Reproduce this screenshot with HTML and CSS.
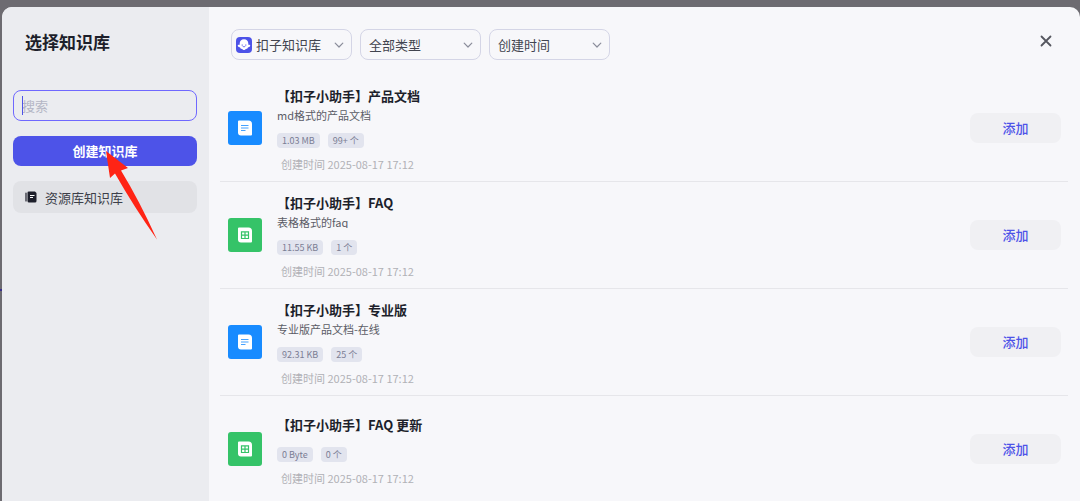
FILE: index.html
```html
<!DOCTYPE html>
<html lang="zh-CN">
<head>
  <meta charset="UTF-8" />
  <meta name="viewport" content="width=device-width, initial-scale=1.0"/>
  <title>选择知识库</title>
  <link rel="stylesheet" href="styles.css">
</head>
<body>
  <svg class="symbols" aria-hidden="true">
    <symbol id="icon-doc" viewBox="0 0 34 34">
      <path fill="#fff" d="M11 9.500h9.500a3.500 3.500 0 0 1 3.500 3.500v10.500a1 1 0 0 1-1 1h-10a3 3 0 0 1-3-3v-11a1 1 0 0 1 1-1z"/>
      <path stroke="#188bff" stroke-opacity=".8" stroke-width="1.200" d="M13 14.500h7.500M13 17h7.500M13 19.500h4.500"/>
    </symbol>
    <symbol id="icon-table" viewBox="0 0 34 34">
      <path fill="#fff" d="M11 9.500h9.500a3.500 3.500 0 0 1 3.500 3.500v10.500a1 1 0 0 1-1 1h-10a3 3 0 0 1-3-3v-11a1 1 0 0 1 1-1z"/>
      <path fill="none" stroke="#35c368" stroke-width="1.200" d="M13.500 13.800h7v6.700h-7zM13.500 17.200h7M17 13.800v6.700"/>
    </symbol>
    <symbol id="icon-chevron" viewBox="0 0 10 10">
      <path fill="none" stroke="#8b8d9b" stroke-width="1.200" stroke-linecap="round" stroke-linejoin="round" d="M1.200 3.200L5 7l3.800-3.800"/>
    </symbol>
  </svg>

  <div class="page-mark"></div>

  <div class="modal" role="dialog" aria-labelledby="modalTitle">
    <aside class="sidebar">
      <h1 class="title" id="modalTitle">选择知识库</h1>
      <div class="search">
        <input class="search-input" type="text" placeholder="搜索" aria-label="搜索">
      </div>
      <button class="create-btn" type="button">创建知识库</button>
      <a class="nav-item" href="#">
        <svg class="nav-icon" viewBox="0 0 12 12" aria-hidden="true">
          <path fill="none" stroke="#1d1f2b" stroke-width="1.200" stroke-linecap="round" d="M1 2v8"/>
          <path fill="#1d1f2b" d="M3.800.5H10l1.500 1.500v8a1.500 1.500 0 0 1-1.500 1.500H4A1.500 1.500 0 0 1 2.500 10V1.800A1.300 1.300 0 0 1 3.800.5z"/>
          <path stroke="#fff" stroke-width="1" d="M5 4.500h4.500M5 6.500h3"/>
        </svg>
        资源库知识库
      </a>
      <svg class="pointer" viewBox="0 0 52 90" aria-hidden="true">
        <path fill="#ff2415" d="M1 1l22 17-7 2.500Q34 50 52 89.500 29 57 10 23.500L5 28z"/>
      </svg>
    </aside>

    <main class="content">
      <header class="toolbar">
        <div class="filter filter-logo">
          <svg class="logo" viewBox="0 0 16 16" aria-hidden="true">
            <rect width="16" height="16" rx="4" fill="#4d53e8"/>
            <path fill="#fff" d="M8 2.200c2.700 0 4.300 1.900 4.300 4.300v1.300h1.200c.9 0 1 1.500.1 1.900l-1.700.8c-.3 1.200-1.200 1.600-2.200 1.400-.6 1.500-2.800 1.500-3.400 0-1 .2-1.900-.2-2.200-1.400l-1.700-.8c-.9-.4-.8-1.900.1-1.900h1.200V6.500c0-2.400 1.600-4.300 4.300-4.300z"/>
            <path fill="none" stroke="#4d53e8" stroke-width=".8" stroke-linecap="round" d="M6.200 7.800v.6M9.800 7.800v.6M7 9.600q1 .8 2 0"/>
          </svg>
          <select class="filter-select" aria-label="知识库">
            <option>扣子知识库</option>
          </select>
          <svg class="chevron" aria-hidden="true"><use href="#icon-chevron"/></svg>
        </div>
        <div class="filter">
          <select class="filter-select" aria-label="类型">
            <option>全部类型</option>
          </select>
          <svg class="chevron" aria-hidden="true"><use href="#icon-chevron"/></svg>
        </div>
        <div class="filter">
          <select class="filter-select" aria-label="排序">
            <option>创建时间</option>
          </select>
          <svg class="chevron" aria-hidden="true"><use href="#icon-chevron"/></svg>
        </div>
        <button class="close-btn" type="button" aria-label="关闭">
          <svg class="close-icon" viewBox="0 0 12 12" aria-hidden="true">
            <path stroke="#55565f" stroke-width="1.800" stroke-linecap="round" d="M1.500 1.500l9 9M10.500 1.500l-9 9"/>
          </svg>
        </button>
      </header>

      <ul class="list">
        <li class="item">
          <svg class="item-icon doc" aria-hidden="true"><use href="#icon-doc"/></svg>
          <div class="item-body">
            <h2 class="item-title">【扣子小助手】产品文档</h2>
            <p class="item-desc">md格式的产品文档</p>
            <div class="tags"><span class="tag">1.03 MB</span><span class="tag">99+ 个</span></div>
            <p class="item-time">创建时间 2025-08-17 17:12</p>
          </div>
          <button class="add-btn" type="button">添加</button>
        </li>
        <li class="item">
          <svg class="item-icon table" aria-hidden="true"><use href="#icon-table"/></svg>
          <div class="item-body">
            <h2 class="item-title">【扣子小助手】FAQ</h2>
            <p class="item-desc">表格格式的faq</p>
            <div class="tags"><span class="tag">11.55 KB</span><span class="tag">1 个</span></div>
            <p class="item-time">创建时间 2025-08-17 17:12</p>
          </div>
          <button class="add-btn" type="button">添加</button>
        </li>
        <li class="item">
          <svg class="item-icon doc" aria-hidden="true"><use href="#icon-doc"/></svg>
          <div class="item-body">
            <h2 class="item-title">【扣子小助手】专业版</h2>
            <p class="item-desc">专业版产品文档-在线</p>
            <div class="tags"><span class="tag">92.31 KB</span><span class="tag">25 个</span></div>
            <p class="item-time">创建时间 2025-08-17 17:12</p>
          </div>
          <button class="add-btn" type="button">添加</button>
        </li>
        <li class="item">
          <svg class="item-icon table" aria-hidden="true"><use href="#icon-table"/></svg>
          <div class="item-body">
            <h2 class="item-title">【扣子小助手】FAQ 更新</h2>
            <div class="tags"><span class="tag">0 Byte</span><span class="tag">0 个</span></div>
            <p class="item-time">创建时间 2025-08-17 17:12</p>
          </div>
          <button class="add-btn" type="button">添加</button>
        </li>
      </ul>
    </main>
  </div>
</body>
</html>
```
FILE: styles.css
```css
* {
  box-sizing: border-box;
}

body {
  margin: 0;
  height: 100vh;
  padding: 7px 0 0 2px;
  overflow: hidden;
  font-family: "Noto Sans CJK SC", sans-serif;
  font-size: 13px;
  color: #1d1f2b;
  background: #6d6b71;
}

button, input, select {
  font-family: inherit;
  font-size: 13px;
}

h1, h2, p, ul {
  margin: 0;
  padding: 0;
}

.symbols {
  position: absolute;
  width: 0;
  height: 0;
}

.page-mark {
  position: absolute;
  left: 0;
  top: 289px;
  width: 2px;
  height: 2px;
  background: #3a2f8c;
}

.modal {
  display: flex;
  height: 100%;
  border-radius: 10px 10px 0 0;
  overflow: hidden;
  background: #f7f7fa;
}

/* sidebar */
.sidebar {
  position: relative;
  display: flex;
  flex-direction: column;
  flex: 0 0 207px;
  padding: 23px 12px 0 11px;
  background: #ebecf0;
}

.title {
  padding-left: 12px;
  font-size: 17px;
  font-weight: 700;
  line-height: 24px;
}

.search {
  position: relative;
  margin-top: 36px;
}

.search::before {
  content: "";
  position: absolute;
  left: 9px;
  top: 6px;
  width: 1px;
  height: 19px;
  background: #4d53e8;
}

.search-input {
  display: block;
  width: 100%;
  height: 31px;
  padding: 0 8px;
  border: 1px solid #6f68ff;
  border-radius: 8px;
  outline: none;
  background: transparent;
}

.search-input::placeholder {
  color: #b4b6c5;
}

.create-btn {
  height: 30px;
  margin-top: 15px;
  padding: 0 0 2px;
  border: 0;
  border-radius: 8px;
  font-weight: 700;
  color: #fff;
  background: #4d53e8;
}

.nav-item {
  display: flex;
  align-items: center;
  gap: 8px;
  height: 32px;
  margin-top: 15px;
  padding: 0 12px;
  border-radius: 8px;
  color: #3d3f4a;
  text-decoration: none;
  background: #e1e2e6;
}

.nav-icon {
  width: 12px;
  height: 12px;
}

/* arrow laid over the create button */
.pointer {
  position: absolute;
  left: 103px;
  top: 143px;
  width: 52px;
  height: 90px;
}

/* content */
.content {
  flex: 1;
  min-width: 0;
}

.toolbar {
  display: flex;
  gap: 8px;
  padding: 22px 23px 0 22px;
}

.filter {
  position: relative;
  width: 121px;
}

.filter-select {
  display: block;
  width: 100%;
  height: 31px;
  padding: 0 24px 0 8px;
  border: 1px solid #d4d5e6;
  border-radius: 8px;
  appearance: none;
  color: #42444f;
  background: transparent;
}

.filter-logo .filter-select {
  padding-left: 24px;
}

.logo {
  position: absolute;
  left: 5px;
  top: 8px;
  width: 16px;
  height: 16px;
}

.chevron {
  position: absolute;
  right: 8px;
  top: 11px;
  width: 10px;
  height: 10px;
  pointer-events: none;
}

.close-btn {
  display: flex;
  align-items: center;
  justify-content: center;
  width: 22px;
  height: 24px;
  margin-left: auto;
  padding: 0;
  border: 0;
  background: transparent;
}

.close-icon {
  width: 12px;
  height: 12px;
}

.list {
  margin-top: 15px;
  padding: 0 12px 0 11px;
  list-style: none;
}

.item {
  display: flex;
  align-items: center;
  height: 107px;
  padding: 0 7px 0 8px;
  border-bottom: 1px solid #e6e6ea;
}

.item:last-child {
  border-bottom-color: transparent;
}

.item-icon {
  flex: none;
  width: 34px;
  height: 34px;
  border-radius: 3px;
}

.item-icon.doc {
  background: #188bff;
}

.item-icon.table {
  background: #35c368;
}

.item-body {
  flex: 1;
  min-width: 0;
  padding: 2px 0 0 15px;
}

.item-title {
  font-size: 13px;
  font-weight: 700;
  line-height: 20px;
}

.item-desc {
  height: 15px;
  overflow: hidden;
  font-size: 11px;
  line-height: 18px;
  color: #5b5c66;
}

.tags {
  display: flex;
  gap: 8px;
  margin-top: 12px;
}

.tag {
  padding: 0 5px;
  border-radius: 4px;
  font-size: 9px;
  line-height: 15px;
  color: #7b7d94;
  background: #e2e4ee;
}

.item-time {
  margin-top: 8px;
  padding-left: 4px;
  font-size: 11px;
  line-height: 16px;
  color: #b1b1b6;
}

.add-btn {
  width: 91px;
  height: 30px;
  padding: 0 0 2px;
  border: 0;
  border-radius: 8px;
  font-weight: 500;
  color: #4d53e8;
  background: #f0f0f3;
}
```
